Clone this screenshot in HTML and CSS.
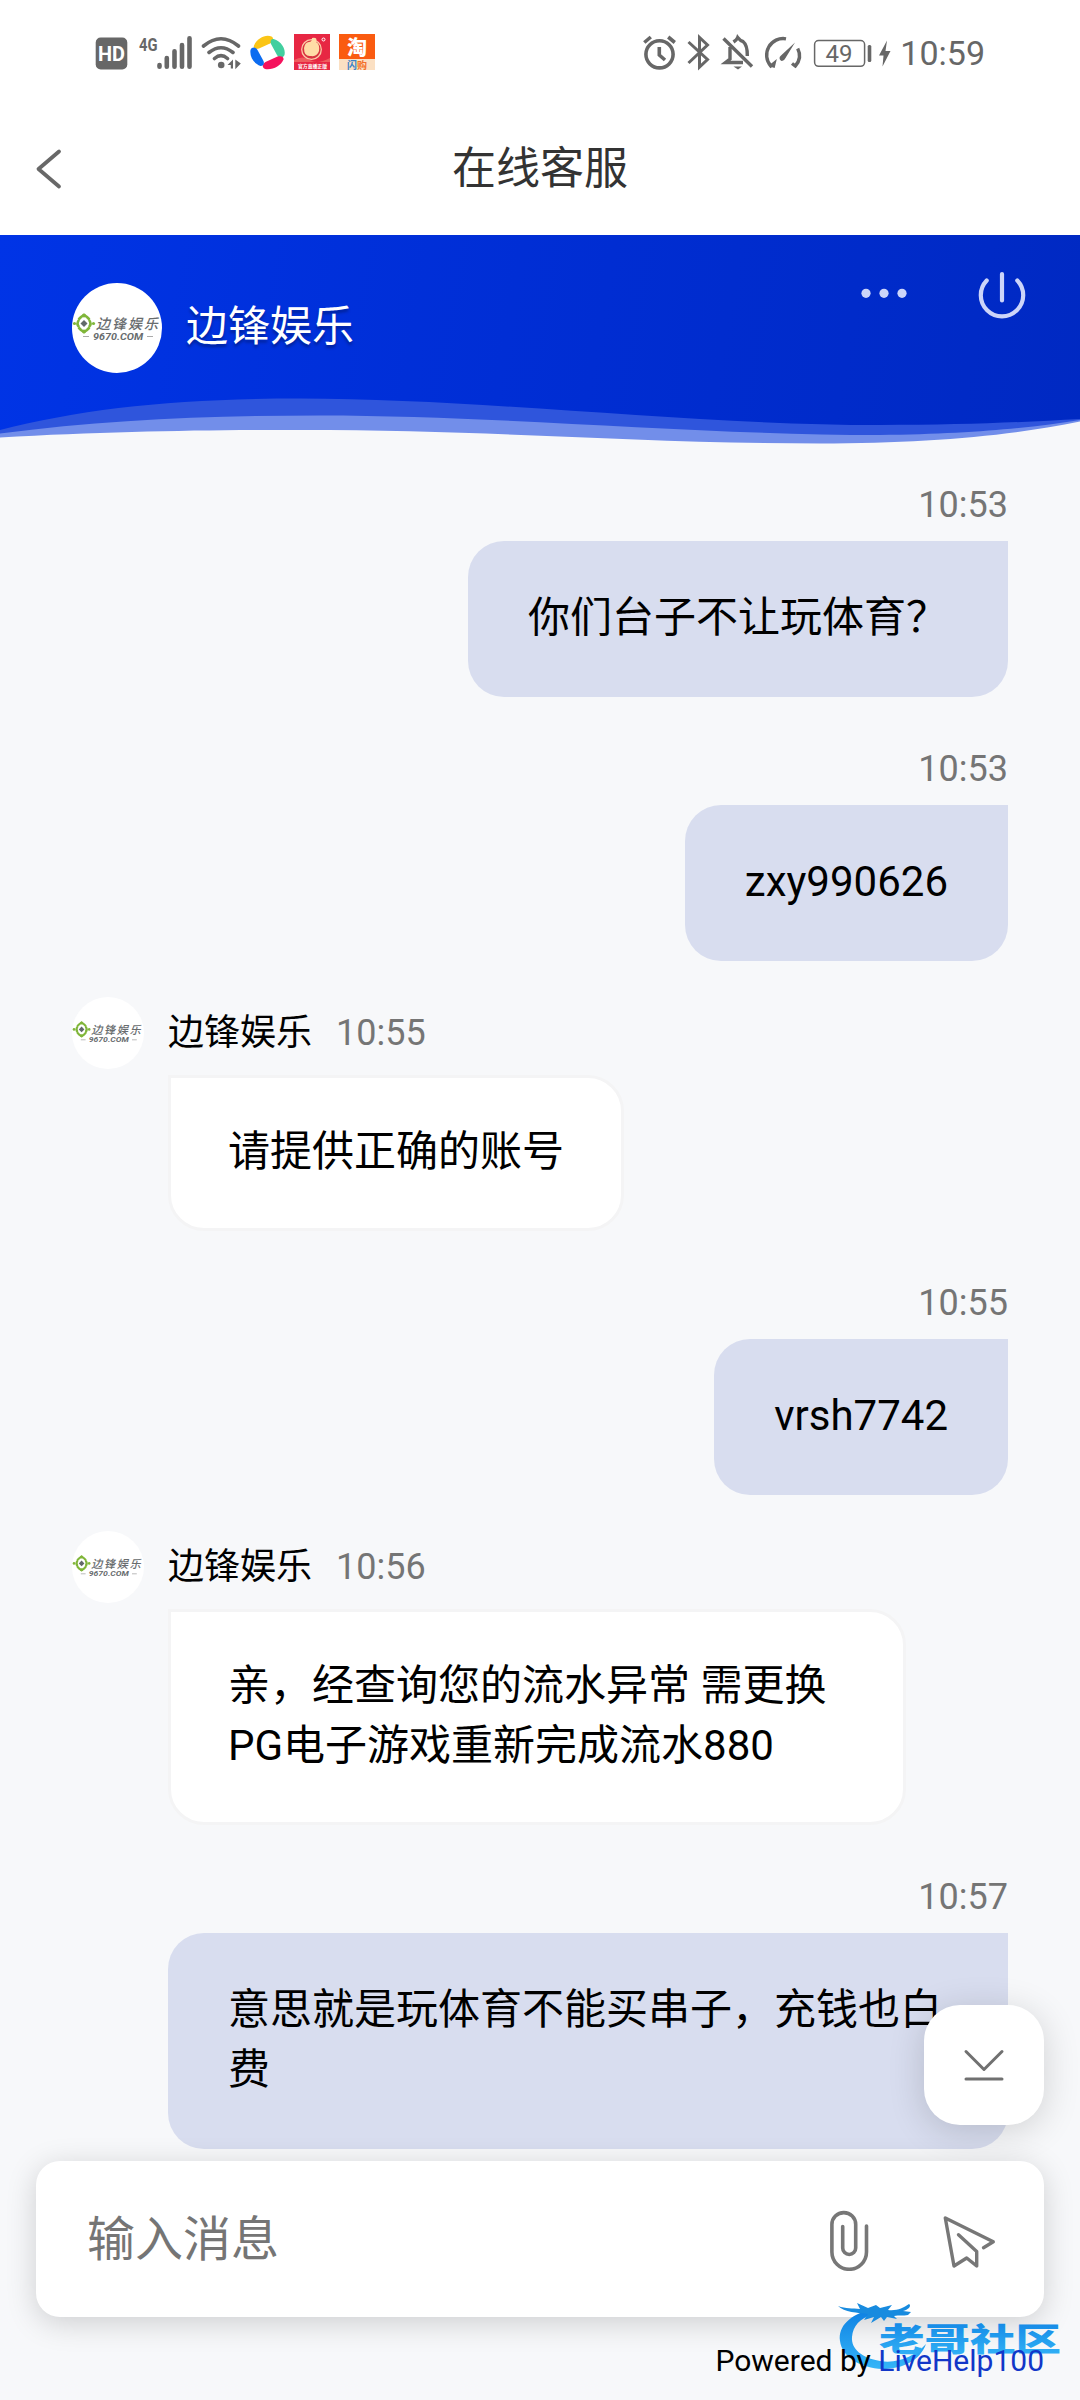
FILE: index.html
```html
<!DOCTYPE html>
<html lang="zh-CN">
<head>
<meta charset="utf-8">
<title>在线客服</title>
<link rel="stylesheet" href="styles.css">
</head>
<body>
<svg class="defs" width="0" height="0">
  <symbol id="brand" viewBox="0 0 90 90">
    <circle cx="45" cy="45" r="45" fill="#fff"/>
    <g fill="none" stroke="#80b63a" stroke-width="2.6">
      <path d="M6.5 36.5L9 34L12 32L15 34L17.5 36.5M6.5 44.5L9 47L12 49L15 47L17.5 44.5M7 37Q4 40.500 7 44M17 37Q20 40.500 17 44"/>
    </g>
    <g fill="#80b63a"><circle cx="2.500" cy="40.500" r="1.600"/><circle cx="21.500" cy="40.500" r="1.600"/><circle cx="12" cy="32.500" r="1.900"/><circle cx="12" cy="48.500" r="1.900"/></g>
    <path d="M12 37L15.500 40.500L12 44L8.500 40.500Z" fill="#62696b"/>
    <text x="24" y="46" class="brand-cn" textLength="62" lengthAdjust="spacing">边锋娱乐</text>
    <text x="21" y="56.500" class="brand-en" textLength="50" lengthAdjust="spacingAndGlyphs">9670.COM</text>
    <path d="M11 53.500H17M75 53.500H81" stroke="#aaa" stroke-width="1"/>
  </symbol>
</svg>

<div class="statusbar">
  <svg class="status-left" width="290" height="44" viewBox="90 32 290 44">
    <rect x="95.700" y="37.500" width="31.600" height="32" rx="5" fill="#676767"/>
    <text x="98" y="61" class="hd" textLength="27" lengthAdjust="spacingAndGlyphs">HD</text>
    <text x="139" y="50.800" class="net" textLength="18.500" lengthAdjust="spacingAndGlyphs">4G</text>
    <g stroke="#676767" stroke-width="4.600" stroke-linecap="round">
      <path d="M159.500 65V66.700M166.800 58V66.700M174.500 51.300V66.700M182 45V66.700M189.500 38.300V66.700"/>
    </g>
    <g fill="none" stroke="#676767" stroke-width="3.600" stroke-linecap="round">
      <path d="M203.500 46Q221 31.500 238.500 46M209 52.500Q221 43 233 52.500M214.500 58.500Q221 52.800 227.500 58.500"/>
    </g>
    <circle cx="221.200" cy="65" r="3.300" fill="#676767"/>
    <path d="M227.500 65L233 59.500V68.500H230.800V65ZM240.800 63.500L235.300 59.500V69.300Z" fill="#676767"/>
    <path d="M254 45.500C257 38 266 34 271.500 36.500C274.500 38.500 273 42 270 43.500L259 48.500C255.500 49.500 253 48.500 254 45.500Z" fill="#fbc516"/>
    <path d="M273.500 39C281 41 286 49 284.500 55C282.500 59 278.500 58 277 55L271 44C270 41 271 39 273.500 39Z" fill="#42cf9f"/>
    <path d="M283.500 59.500C281 66 272 70.500 265 69C261.500 67.500 262.500 63.500 265.500 62L277.500 56.500C281 55.500 284 56.500 283.500 59.500Z" fill="#f5125c"/>
    <path d="M260.500 66C253.500 63.500 249.500 56.500 250.500 50C252 46.500 256 47 257.500 50L263.500 61C264.500 64 263.500 66 260.500 66Z" fill="#0c6cf0"/>
    <rect x="294" y="34" width="36" height="36" fill="#e72743"/>
    <path d="M294 60Q303 55 310 60T330 58V62H294Z" fill="#f48272" opacity=".6"/>
    <circle cx="311.500" cy="49.500" r="9.800" fill="#d83440" stroke="#fbcaa7" stroke-width="1.300"/>
    <path d="M309 42Q312 42 312 38Q318 37 316 42Q320 44 319 51Q317 57 311 56Q304 57 304 48Q305 42 309 42Z" fill="#ffdca7"/>
    <circle cx="323.500" cy="39.500" r="1.500" fill="none" stroke="#fff" stroke-width="1"/>
    <text x="298" y="68.300" class="tiny" textLength="29" lengthAdjust="spacingAndGlyphs">官方直播正版</text>
    <rect x="339" y="34" width="36" height="26" fill="#fa5b10"/>
    <rect x="339" y="59" width="36" height="11" fill="#fbe0c3"/>
    <text x="347" y="55" class="tao">淘</text>
    <text x="347" y="69" class="flash" textLength="20" lengthAdjust="spacingAndGlyphs"><tspan fill="#3b82c7">闪</tspan>购</text>
  </svg>
  <div class="status-right">
    <svg width="256" height="44" viewBox="640 32 256 44" fill="none" stroke="#676767" stroke-width="3.600">
      <circle cx="659.500" cy="54.300" r="13.600"/>
      <path d="M659.300 47V55L665 60M644.300 42.500L650.800 37M668.200 37L674.800 42.500"/>
      <path d="M688.500 42L707.500 59.500L699.500 67V37.500L707.500 45L688.500 63" stroke-width="3"/>
      <path d="M723.500 38.500L752 66.500M730 47V59L725.500 62.500H743M733.500 42Q737 39.500 737.700 37.500Q740.500 41 743 41.500Q747.500 45 747.300 56" stroke-width="3.400"/>
      <path d="M733.500 66.500H742L738 69.500Z" fill="#676767" stroke="none"/>
      <path d="M773 67.500L774 63.500L770.800 66A16.500 16.500 0 0 1 786 38.800M797.700 48.500Q802.500 58 795.300 66L792 63.500" stroke-width="3.400"/>
      <path d="M795 42.500L785.500 58Q784 61.500 781 60.800Q778 58 781 55.500Z" fill="#676767" stroke="none"/>
      <rect x="814.600" y="40.500" width="50" height="25.800" rx="4" stroke-width="1.500"/>
      <rect x="867.700" y="45" width="3.600" height="17" rx="1.500" fill="#676767" stroke="none"/>
      <path d="M887 40.500L879 55.500H883.500L882.500 66.500L890.500 51H885.500Z" fill="#676767" stroke="none"/>
      <text x="825.500" y="62" class="battery">49</text>
    </svg>
    <span class="clock">10:59</span>
  </div>
</div>

<nav class="navbar">
  <svg class="back" width="30" height="42" viewBox="34 148 30 42" fill="none" stroke="#686868" stroke-width="3.800" stroke-linecap="round" stroke-linejoin="round"><path d="M59 151.500L38.500 169L59 186.500"/></svg>
  <h1 class="nav-title">在线客服</h1>
</nav>

<header class="banner">
  <svg class="waves" width="1080" height="60" viewBox="0 390 1080 60">
    <path d="M0 430C85 408 180 398.500 300 398.500C480 398.500 690 425 880 425C965 425 1025 422 1080 419V450H0Z" fill="#2f55dc"/>
    <path d="M0 433.500C105 420 210 415.500 320 415.500C500 415.500 700 435 880 435C970 434 1030 428 1080 420V450H0Z" fill="#728eea"/>
    <path d="M0 437.500C110 431.500 200 430 300 430C500 430 640 443.500 820 443.500C925 443 1010 436 1080 421.500V450H0Z" fill="#f7f8fa"/>
  </svg>
  <div class="banner-row">
    <svg class="banner-logo" width="90" height="90"><use href="#brand"/></svg>
    <span class="banner-name">边锋娱乐</span>
    <div class="banner-actions">
      <svg width="46" height="12" viewBox="860.500 287 46 12" fill="#ccd5f9"><circle cx="865.500" cy="293.300" r="4.600"/><circle cx="883.500" cy="293.300" r="4.600"/><circle cx="901.500" cy="293.300" r="4.600"/></svg>
      <svg width="50" height="50" viewBox="977 270 50 50" fill="none" stroke="#ccd5f9" stroke-width="4.200" stroke-linecap="round"><path d="M1002 274V300.500M986.700 280.500A21.200 21.200 0 1 0 1017.300 280.500"/></svg>
    </div>
  </div>
</header>

<main class="chat">
  <section class="msg mine"><time class="time">10:53</time><p class="bubble">你们台子不让玩体育？</p></section>
  <section class="msg mine"><time class="time">10:53</time><p class="bubble">zxy990626</p></section>
  <section class="msg agent">
    <div class="head"><svg width="72" height="72"><use href="#brand"/></svg><span class="name">边锋娱乐</span><time class="time">10:55</time></div>
    <p class="bubble">请提供正确的账号</p>
  </section>
  <section class="msg mine"><time class="time">10:55</time><p class="bubble">vrsh7742</p></section>
  <section class="msg agent">
    <div class="head"><svg width="72" height="72"><use href="#brand"/></svg><span class="name">边锋娱乐</span><time class="time">10:56</time></div>
    <p class="bubble wide">亲，经查询您的流水异常 需更换<br>PG电子游戏重新完成流水880</p>
  </section>
  <section class="msg mine"><time class="time">10:57</time><p class="bubble">意思就是玩体育不能买串子，充钱也白费</p></section>
  <button class="to-bottom" aria-label="回到底部"><svg width="44" height="36" viewBox="962 2047 44 36" fill="none" stroke="#707070" stroke-width="3" stroke-linecap="round" stroke-linejoin="round"><path d="M966 2051.500L984 2069.500L1002 2051.500M966 2079H1002"/></svg></button>
</main>

<footer class="bottom">
  <div class="composer">
    <span class="placeholder">输入消息</span>
    <svg width="42" height="64" viewBox="828 2208 42 64" fill="none" stroke="#777" stroke-width="3.600" stroke-linecap="round"><path d="M866.500 2227V2253A17.300 17.300 0 0 1 831.900 2253V2225.500A11.900 11.900 0 0 1 855.700 2225.500V2249A6.500 6.500 0 0 1 842.700 2249V2227.500"/></svg>
    <svg width="54" height="56" viewBox="942 2214 54 56" fill="none" stroke="#777" stroke-width="3.400" stroke-linecap="round" stroke-linejoin="round"><path d="M983.500 2247.700L993.300 2241.800L945.300 2218L954 2266L966.700 2258L976.700 2266V2251.500L958.500 2234.700"/></svg>
  </div>
  <p class="powered">Powered by <a class="brand-link">LiveHelp100</a></p>
</footer>

<svg class="watermark" width="230" height="80" viewBox="835 2298 230 80">
  <defs><linearGradient id="wm" x1="0" y1="0" x2="0" y2="1"><stop offset="0" stop-color="#0d7fe2"/><stop offset="1" stop-color="#35b6f8"/></linearGradient></defs>
  <path d="M871 2309C850 2315 838 2326 840 2341C842 2358 862 2368 882 2369C904 2369 920 2360 926 2344C915 2356 898 2364 880 2361C862 2358 851 2349 852 2337C853 2326 860 2318 872 2315Z" fill="url(#wm)"/>
  <path d="M838 2306C846 2309 852 2308 860 2309L857 2303L868 2308L876 2305L880 2308L892 2305L888 2310C897 2311 903 2308 909 2304C912 2306 908 2310 903 2311L911 2312L908 2315C903 2316 899 2315 894 2316L897 2319L887 2317L884 2321L881 2317L871 2323L874 2317L864 2320L868 2314C858 2313 844 2312 838 2306Z" fill="#188bdf"/>
  <text x="879" y="2350.500" class="wm-text" textLength="182" lengthAdjust="spacingAndGlyphs" fill="url(#wm)">老哥社区</text>
</svg>
</body>
</html>
```
FILE: styles.css
```css
* { box-sizing: border-box; }
html, body { margin: 0; padding: 0; }
body {
  position: relative;
  display: flex;
  flex-direction: column;
  width: 1080px;
  height: 2400px;
  overflow: hidden;
  background: #f7f8fa;
  color: #000;
  font-family: Roboto, "Noto Sans CJK SC", sans-serif;
}
svg { display: block; flex: none; }
p, h1 { margin: 0; font-weight: 400; }
.defs { position: absolute; }

.brand-cn { font: italic 500 14px "Noto Sans CJK SC", sans-serif; fill: #686c6e; }
.brand-en { font: italic 700 9.500px Roboto, sans-serif; fill: #686c6e; }

.statusbar {
  display: flex;
  justify-content: space-between;
  height: 100px;
  padding: 32px 96px 0 90px;
  background: #fff;
}
.status-right { display: flex; gap: 3px; }
.status-right svg { margin-right: 1px; }
.clock { font-size: 34px; line-height: 42px; color: #676767; }
.status-right { margin-right: -1px; }
.hd { font: 700 20px Roboto, sans-serif; fill: #fff; }
.net { font: 700 19px Roboto, sans-serif; fill: #676767; }
.tiny { font: 700 5px "Noto Sans CJK SC", sans-serif; fill: #fff; }
.tao { font: 900 20px "Noto Sans CJK SC", sans-serif; fill: #fff; }
.flash { font: 700 10px "Noto Sans CJK SC", sans-serif; fill: #f4702a; }
.battery { font: 400 24px Roboto, sans-serif; fill: #676767; stroke: none; }

.navbar {
  display: grid;
  grid-template-columns: 60px 1fr 60px;
  align-items: center;
  height: 135px;
  padding: 3px 34px 0;
  background: #fff;
}
.nav-title { font-size: 44px; line-height: 60px; text-align: center; color: #333; }

.banner {
  position: relative;
  height: 215px;
  background: linear-gradient(100deg, #0034e6 0%, #002dd2 55%, #0029c2 100%);
}
.waves { position: absolute; left: 0; bottom: 0; }
.banner-row {
  position: relative;
  display: flex;
  gap: 24px;
  padding: 48px 53px 0 72px;
}
.banner-name {
  flex: 1;
  font-size: 42px;
  line-height: 88px;
  color: #fff;
  text-shadow: 0 3px 3px rgba(0, 0, 0, .3);
}
.banner-actions { display: flex; align-items: center; gap: 70px; height: 50px; margin-top: -13px; }
.banner-actions svg:first-child { margin-top: -5px; }

.chat {
  position: relative;
  display: flex;
  flex-direction: column;
  gap: 36px;
  height: 1711px;
  padding: 19px 72px 0;
}
.msg { display: flex; flex-direction: column; }
.mine { align-items: flex-end; padding-left: 96px; }
.mine .time { height: 72px; line-height: 72px; }
.time { font-size: 36px; color: #757575; }
.head { display: flex; align-items: center; height: 72px; margin-bottom: 6px; }
.head .name { margin: 0 24px; font-size: 36px; line-height: 54px; }
.bubble { font-size: 42px; line-height: 60px; }
.mine .bubble {
  padding: 47px 60px 49px;
  border-radius: 36px 0 36px 36px;
  background: #d8ddef;
}
.agent .bubble {
  align-self: flex-start;
  margin-left: 96px;
  padding: 44px 57px 46px;
  border: 3px solid #f4f4f5;
  border-radius: 0 36px 36px 36px;
  background: #fff;
}
.agent .wide { width: 738px; }

.to-bottom {
  position: absolute;
  right: 36px;
  bottom: 36px;
  display: grid;
  place-items: center;
  width: 120px;
  height: 120px;
  padding: 0;
  border: 0;
  border-radius: 36px;
  background: #fff;
  box-shadow: 0 6px 36px rgba(0, 0, 0, .16);
}

.bottom { position: relative; padding: 0 36px; }
.composer {
  display: flex;
  align-items: center;
  height: 156px;
  padding: 0 48px 0 51px;
  border-radius: 24px;
  background: #fff;
  box-shadow: 0 6px 30px rgba(0, 0, 0, .17);
}
.placeholder { flex: 1; padding-top: 2px; font-size: 48px; line-height: 70px; color: #757575; }
.composer svg + svg { margin-left: 72px; margin-top: 6px; }
.powered {
  position: relative;
  z-index: 2;
  margin-top: 26px;
  font-size: 30px;
  line-height: 36px;
  text-align: right;
}
.brand-link { color: #1236c8; }

.watermark { position: absolute; left: 835px; top: 2298px; z-index: 1; }
.wm-text { font: 900 32px "Noto Sans CJK SC", sans-serif; }
```
